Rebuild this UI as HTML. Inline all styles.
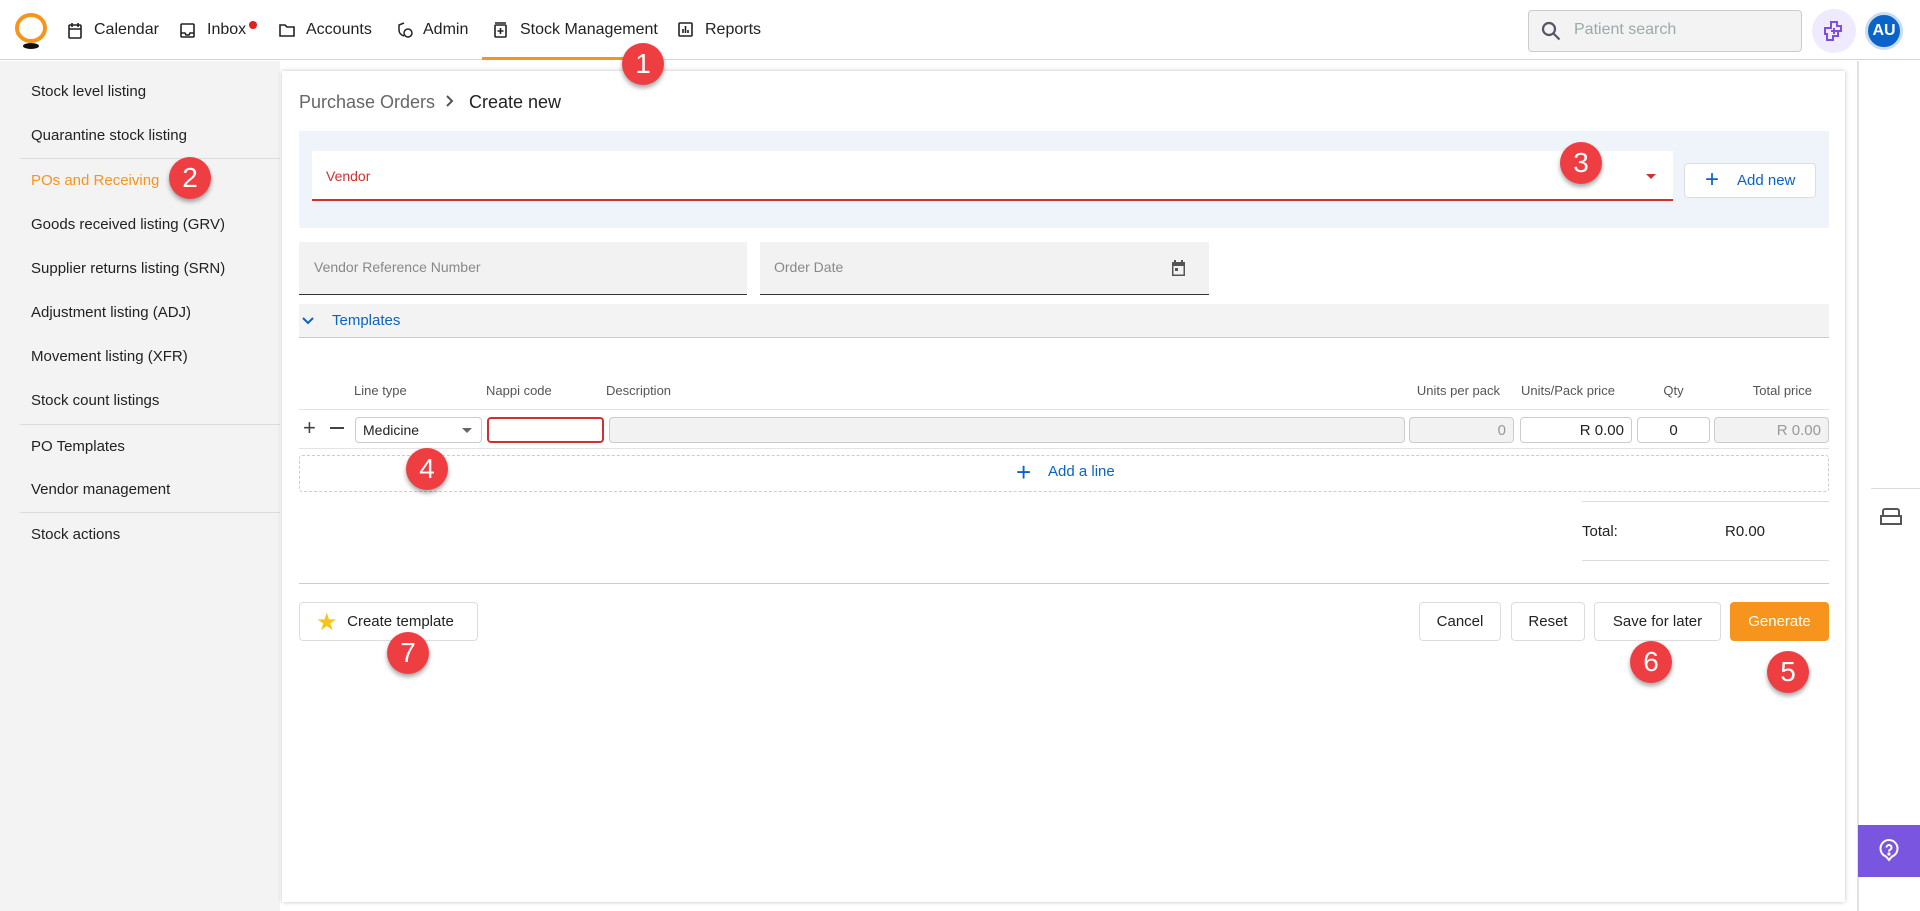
<!DOCTYPE html>
<html><head><meta charset="utf-8"><style>
*{box-sizing:border-box;margin:0;padding:0}
body{width:1920px;height:911px;overflow:hidden;background:#fff;font-family:"Liberation Sans",sans-serif;color:#222;position:relative}
.a{position:absolute}
.nav{left:0;top:0;width:1920px;height:60px;background:#fff;border-bottom:1px solid #d5d5d5}
.ni{position:absolute;top:21px;font-size:16px;color:#222}
.side{left:0;top:61px;width:280px;height:850px;background:#f3f3f3}
.si{position:absolute;left:31px;font-size:15px;color:#222}
.sep{position:absolute;left:20px;width:260px;height:1px;background:#dcdcdc}
.panel{left:282px;top:71px;width:1563px;height:831px;background:#fff;box-shadow:0 0 4px rgba(0,0,0,.25)}
.badge{position:absolute;width:42px;height:42px;border-radius:50%;background:#ef3e42;color:#fff;font-size:28px;text-align:center;line-height:42px;box-shadow:0 3px 5px rgba(0,0,0,.35);z-index:5}
.th{position:absolute;top:383px;font-size:13px;color:#555}
.inp{position:absolute;top:417px;height:26px;border:1px solid #ccc;border-radius:4px;font-size:15px;padding:4px 7px}
.btn{position:absolute;top:602px;height:39px;border:1px solid #ddd;border-radius:4px;background:#fff;font-size:15px;text-align:center;line-height:37px;color:#222}
</style></head><body>
<div class="a nav">
  <svg class="a" style="left:14px;top:13px" width="34" height="36" viewBox="0 0 34 36"><ellipse cx="17" cy="15" rx="14" ry="13" fill="none" stroke="#f7941d" stroke-width="4"/><ellipse cx="17" cy="33" rx="8" ry="3" fill="#111"/></svg>
  <svg class="a" style="left:67px;top:22px" width="16" height="17" viewBox="0 0 16 17" fill="none" stroke="#222" stroke-width="1.6"><rect x="2" y="3" width="12" height="13" rx="1"/><path d="M2 7h12M5 1v4M11 1v4"/></svg>
  <div class="ni" style="left:94px">Calendar</div>
  <svg class="a" style="left:180px;top:23px" width="15" height="15" viewBox="0 0 15 15" fill="none" stroke="#222" stroke-width="1.6"><rect x="1" y="1" width="13" height="13" rx="1"/><path d="M1 10h4l1 2h3l1-2h4"/></svg>
  <div class="ni" style="left:207px">Inbox</div><div class="a" style="left:249px;top:21px;width:8px;height:8px;border-radius:50%;background:#e02020"></div>
  <svg class="a" style="left:279px;top:23px" width="16" height="14" viewBox="0 0 16 14" fill="none" stroke="#222" stroke-width="1.6"><path d="M1 2h5l2 2h7v9H1z"/></svg>
  <div class="ni" style="left:306px">Accounts</div>
  <svg class="a" style="left:397px;top:22px" width="16" height="16" viewBox="0 0 16 16" fill="none" stroke="#222" stroke-width="1.5"><path d="M7 1L2 3v5c0 3 2 5 5 6"/><circle cx="11" cy="11" r="4"/></svg>
  <div class="ni" style="left:423px">Admin</div>
  <svg class="a" style="left:494px;top:22px" width="13" height="16" viewBox="0 0 13 16" fill="none" stroke="#222" stroke-width="1.6"><rect x="1" y="3" width="11" height="12" rx="1"/><path d="M1 1h11M6.5 6v6M3.5 9h6"/></svg>
  <div class="ni" style="left:520px">Stock Management</div>
  <div class="a" style="left:482px;top:57px;width:176px;height:3px;background:#f7941d"></div>
  <svg class="a" style="left:678px;top:22px" width="15" height="15" viewBox="0 0 15 15" fill="none" stroke="#222" stroke-width="1.6"><rect x="1" y="1" width="13" height="13" rx="1"/><path d="M5 11V7M7.5 11V4M10 11V8"/></svg>
  <div class="ni" style="left:705px">Reports</div>
  <div class="a" style="left:1528px;top:10px;width:274px;height:42px;background:#f3f3f3;border:1px solid #ccc;border-radius:4px"></div>
  <svg class="a" style="left:1541px;top:21px" width="21" height="21" viewBox="0 0 21 21" fill="none" stroke="#556" stroke-width="2.2"><circle cx="8" cy="8" r="6"/><path d="M12.5 12.5l6 6"/></svg>
  <div class="a" style="left:1574px;top:21px;font-size:16px;color:#9aa">Patient search</div>
  <div class="a" style="left:1812px;top:9px;width:44px;height:44px;border-radius:50%;background:#efeafd"></div>
  <svg class="a" style="left:1822px;top:19px" width="24" height="24" viewBox="0 0 24 24" fill="none" stroke="#7b4fe0" stroke-width="2"><path d="M9 3h6v4h4v5h-3v5h-5v4H5v-6H3V9h6z"/><path d="M12 9v6M9 12h6"/></svg>
  <div class="a" style="left:1865px;top:12px;width:38px;height:38px;border-radius:50%;background:#0a63c9;border:3px solid #c9dcf2;color:#fff;font-size:16px;font-weight:bold;text-align:center;line-height:32px">AU</div>
</div>
<div class="badge" style="left:622px;top:43px">1</div>

<div class="a side">
  <div class="si" style="top:22px">Stock level listing</div>
  <div class="si" style="top:66px">Quarantine stock listing</div>
  <div class="sep" style="top:97px"></div>
  <div class="si" style="top:111px;color:#f7941d">POs and Receiving</div>
  <div class="si" style="top:155px">Goods received listing (GRV)</div>
  <div class="si" style="top:199px">Supplier returns listing (SRN)</div>
  <div class="si" style="top:243px">Adjustment listing (ADJ)</div>
  <div class="si" style="top:287px">Movement listing (XFR)</div>
  <div class="si" style="top:331px">Stock count listings</div>
  <div class="sep" style="top:363px"></div>
  <div class="si" style="top:377px">PO Templates</div>
  <div class="si" style="top:420px">Vendor management</div>
  <div class="sep" style="top:451px"></div>
  <div class="si" style="top:465px">Stock actions</div>
</div>
<div class="badge" style="left:169px;top:157px">2</div>

<div class="a" style="left:1857px;top:61px;width:2px;height:850px;background:#e2e2e2"></div>
<div class="a" style="left:1871px;top:488px;width:49px;height:1px;background:#ddd"></div>
<svg class="a" style="left:1878px;top:507px" width="26" height="20" viewBox="0 0 26 20" fill="none" stroke="#555" stroke-width="2"><path d="M5 9V4a2 2 0 0 1 2-2h12a2 2 0 0 1 2 2v5M3 9h20v8H3z"/></svg>
<div class="a" style="left:1858px;top:825px;width:62px;height:52px;background:#7a55e0"></div>
<svg class="a" style="left:1877px;top:839px" width="24" height="24" viewBox="0 0 24 24" fill="none" stroke="#fff" stroke-width="2"><path d="M12 21l-3-3.5A8.5 8.5 0 1 1 15 17.5z"/><path d="M9.5 8.5a2.5 2.5 0 1 1 3.5 2.3c-.7.4-1 .8-1 1.7"/><circle cx="12" cy="15" r=".6" fill="#fff"/></svg>

<div class="a panel"></div>
<div class="a" style="left:299px;top:92px;font-size:18px;color:#666">Purchase Orders</div>
<svg class="a" style="left:445px;top:94px" width="10" height="14" viewBox="0 0 10 14" fill="none" stroke="#555" stroke-width="2"><path d="M2 2l5 5-5 5"/></svg>
<div class="a" style="left:469px;top:92px;font-size:18px;color:#222">Create new</div>

<div class="a" style="left:299px;top:131px;width:1530px;height:97px;background:#eff4fa"></div>
<div class="a" style="left:312px;top:151px;width:1361px;height:50px;background:#fff;border-bottom:2px solid #d32f2f"></div>
<div class="a" style="left:326px;top:168px;font-size:14px;color:#d32f2f">Vendor</div>
<div class="a" style="left:1646px;top:174px;border:5px solid transparent;border-top:5px solid #d32f2f"></div>
<div class="badge" style="left:1560px;top:142px">3</div>
<div class="a" style="left:1684px;top:163px;width:132px;height:35px;background:#fff;border:1px solid #ddd;border-radius:4px;color:#0a63c9;font-size:15px;line-height:33px;padding-left:52px">Add new</div>
<div class="a" style="left:1705px;top:170px;font-size:24px;color:#0a63c9;line-height:20px">+</div>

<div class="a" style="left:299px;top:242px;width:448px;height:53px;background:#f2f2f2;border-bottom:1px solid #333"></div>
<div class="a" style="left:314px;top:259px;font-size:14px;color:#888">Vendor Reference Number</div>
<div class="a" style="left:760px;top:242px;width:449px;height:53px;background:#f2f2f2;border-bottom:1px solid #333"></div>
<div class="a" style="left:774px;top:259px;font-size:14px;color:#888">Order Date</div>
<svg class="a" style="left:1170px;top:259px" width="17" height="18" viewBox="0 0 17 18" fill="#555"><path d="M2 3h13v14H2zM3.5 7v8.5h10V7z"/><rect x="4" y="1" width="2" height="3"/><rect x="11" y="1" width="2" height="3"/><rect x="5" y="9" width="3" height="3"/></svg>

<div class="a" style="left:299px;top:304px;width:1530px;height:34px;background:#f3f3f3;border-bottom:1px solid #ccc"></div>
<svg class="a" style="left:302px;top:316px" width="12" height="10" viewBox="0 0 12 10" fill="none" stroke="#0a63c9" stroke-width="2"><path d="M1 2l5 5 5-5"/></svg>
<div class="a" style="left:332px;top:312px;font-size:15px;color:#0a63c9">Templates</div>

<div class="th" style="left:354px">Line type</div>
<div class="th" style="left:486px">Nappi code</div>
<div class="th" style="left:606px">Description</div>
<div class="th" style="left:1409px;width:91px;text-align:right">Units per pack</div>
<div class="th" style="left:1521px">Units/Pack price</div>
<div class="th" style="left:1637px;width:73px;text-align:center">Qty</div>
<div class="th" style="left:1714px;width:98px;text-align:right">Total price</div>
<div class="a" style="left:299px;top:409px;width:1530px;height:1px;background:#e3e3e3"></div>
<div class="a" style="left:299px;top:448px;width:1530px;height:1px;background:#e3e3e3"></div>
<div class="a" style="left:303px;top:415px;font-size:22px;color:#444">+</div>
<div class="a" style="left:330px;top:427px;width:14px;height:2px;background:#444"></div>
<div class="inp" style="left:355px;width:127px;border-color:#ccc;font-size:14px">Medicine</div>
<div class="a" style="left:462px;top:428px;border:5px solid transparent;border-top:5px solid #666"></div>
<div class="inp" style="left:487px;width:117px;border:2px solid #d32f2f"></div>
<div class="inp" style="left:609px;width:796px;background:#f2f2f2"></div>
<div class="inp" style="left:1409px;width:105px;background:#f2f2f2;text-align:right;color:#999">0</div>
<div class="inp" style="left:1520px;width:112px;text-align:right">R 0.00</div>
<div class="inp" style="left:1637px;width:73px;text-align:center">0</div>
<div class="inp" style="left:1714px;width:115px;background:#f2f2f2;text-align:right;color:#999">R 0.00</div>

<div class="a" style="left:299px;top:455px;width:1530px;height:37px;border:1px dashed #ccc;border-radius:3px"></div>
<div class="a" style="left:1016px;top:457px;font-size:26px;color:#0a63c9">+</div>
<div class="a" style="left:1048px;top:463px;font-size:15px;color:#0a63c9">Add a line</div>
<div class="badge" style="left:406px;top:448px">4</div>

<div class="a" style="left:1582px;top:501px;width:247px;height:1px;background:#ddd"></div>
<div class="a" style="left:1582px;top:523px;font-size:15px">Total:</div>
<div class="a" style="left:1725px;top:523px;font-size:15px">R0.00</div>
<div class="a" style="left:1582px;top:560px;width:247px;height:1px;background:#ddd"></div>
<div class="a" style="left:299px;top:583px;width:1530px;height:1px;background:#ccc"></div>

<div class="btn" style="left:299px;width:179px;padding-left:24px">Create template</div>
<div class="a" style="left:316px;top:608px;font-size:24px;color:#f5c518">★</div>
<div class="badge" style="left:387px;top:632px">7</div>
<div class="btn" style="left:1419px;width:82px">Cancel</div>
<div class="btn" style="left:1511px;width:74px">Reset</div>
<div class="btn" style="left:1594px;width:127px">Save for later</div>
<div class="btn" style="left:1730px;width:99px;background:#f7941d;border-color:#f7941d;color:#fff">Generate</div>
<div class="badge" style="left:1630px;top:641px">6</div>
<div class="badge" style="left:1767px;top:651px">5</div>
</body></html>
